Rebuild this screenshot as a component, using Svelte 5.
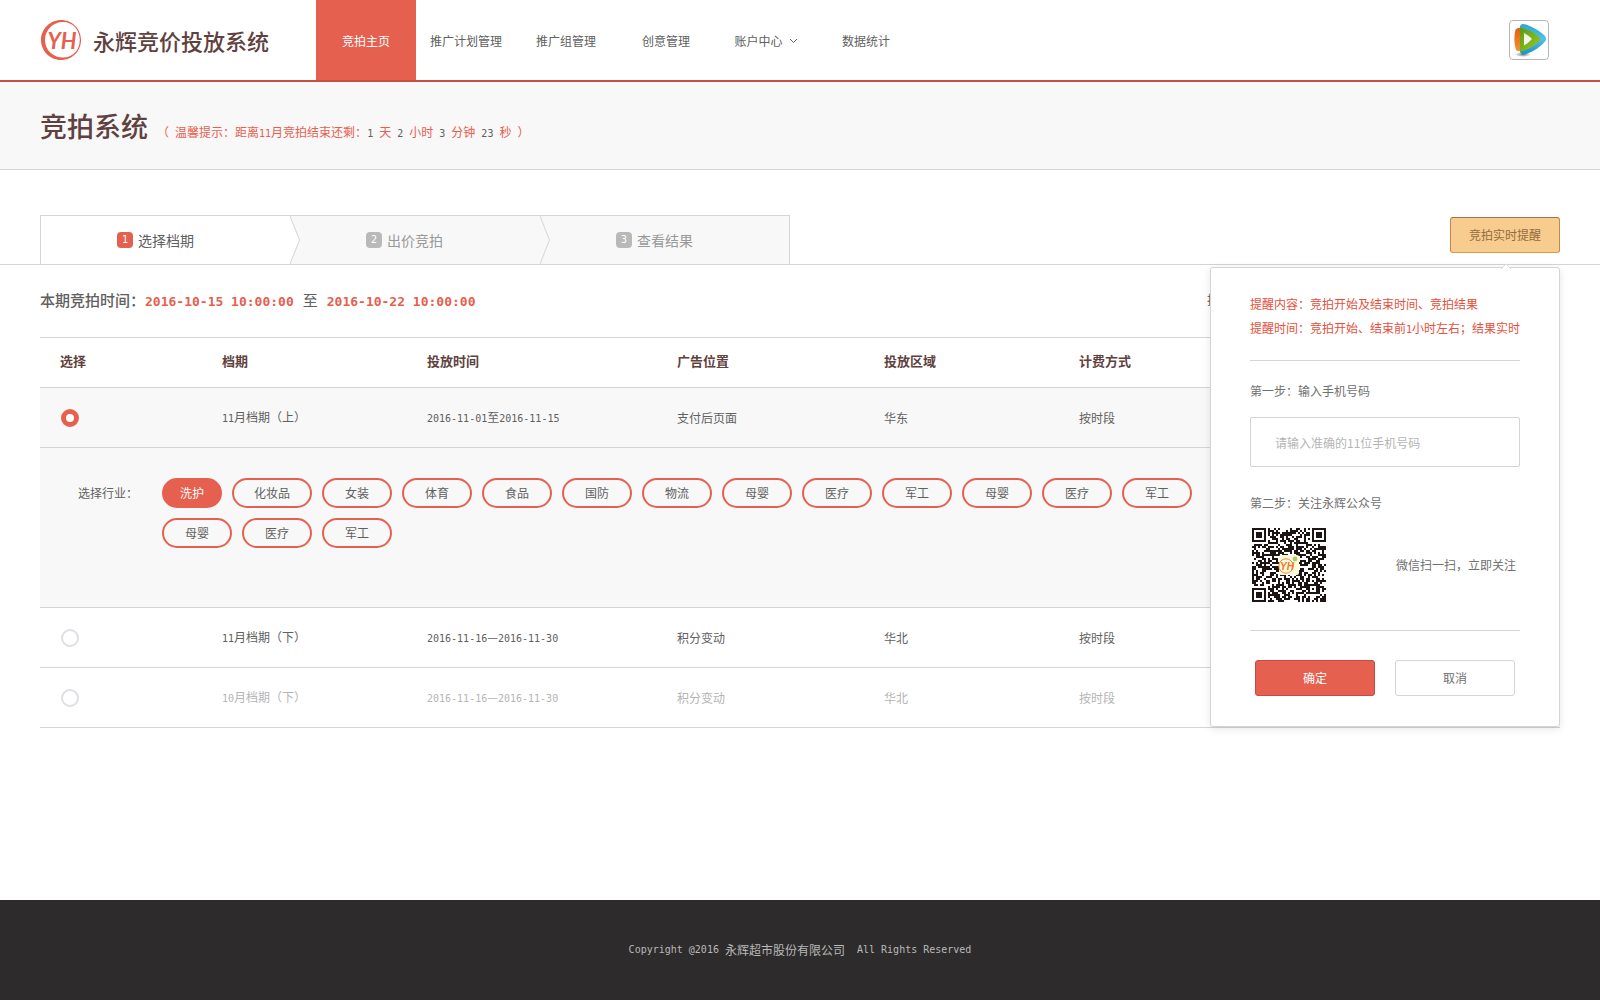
<script lang="ts">
  const nav = ['竞拍主页', '推广计划管理', '推广组管理', '创意管理', '账户中心', '数据统计'];
  const steps = ['选择档期', '出价竞拍', '查看结果'];
  const heads = ['选择', '档期', '投放时间', '广告位置', '投放区域', '计费方式'];
  const industries = [
    '洗护', '化妆品', '女装', '体育', '食品', '国防', '物流', '母婴',
    '医疗', '军工', '母婴', '医疗', '军工', '母婴', '医疗', '军工'
  ];
  const rows = [
    { cells: ['11月档期（上）', '2016-11-01至2016-11-15', '支付后页面', '华东', '按时段'], off: false },
    { cells: ['11月档期（下）', '2016-11-16—2016-11-30', '积分变动', '华北', '按时段'], off: false },
    { cells: ['10月档期（下）', '2016-11-16—2016-11-30', '积分变动', '华北', '按时段'], off: true }
  ];
  const left = [['1', '天'], ['2', '小时'], ['3', '分钟'], ['23', '秒']];

  let picked = $state(0);
  let industry = $state(0);
  let open = $state(true);
  let phone = $state('');

  // Splits text so that Latin runs can take the half-width face.
  const runs = (s: string) => s.split(/([ -~]+)/).filter(Boolean);
  const isLatin = (s: string) => /^[ -~]/.test(s);

  // 37 x 37 module code with three finders and one alignment mark.
  function buildCode(): string {
    const n = 37;
    let seed = 20161;
    let d = '';
    const ring = (x: number, y: number, cx: number, cy: number) => Math.max(Math.abs(x - cx), Math.abs(y - cy));
    for (let y = 0; y < n; y++) {
      for (let x = 0; x < n; x++) {
        seed = (seed * 1103515245 + 12345) % 2147483648;
        let on = (seed >> 16) % 100 < 55;
        for (const [cx, cy] of [[3, 3], [33, 3], [3, 33]]) {
          const r = ring(x, y, cx, cy);
          if (r <= 4) on = r === 3 || r <= 1;
        }
        const a = ring(x, y, 30, 30);
        if (a <= 2) on = a !== 1;
        if (x > 13 && x < 23 && y > 13 && y < 23) on = false;
        if (on) d += `M${x} ${y}h1v1h-1z`;
      }
    }
    return d;
  }
  const code = buildCode();
</script>

{#snippet mix(text: string)}
  {#each runs(text) as r}{#if isLatin(r)}<span class="lat">{r}</span>{:else}{r}{/if}{/each}
{/snippet}

<div class="page">
  <header class="top">
    <a class="brand" href="#home">
      <svg width="42" height="42" viewBox="0 0 42 42" aria-hidden="true">
        <path fill="#e6604f" fill-rule="evenodd" d="M21 1C32 1 41 9.500 41 21S32 41 21 41 1 32 1 21 10 1 21 1ZM23 3C13 3 5 11 5 21s8 17.500 18 17.500S39.800 31 39.800 21 33 3 23 3Z" />
        <text x="22" y="30" text-anchor="middle" class="mark">YH</text>
      </svg>
      <span>永辉竞价投放系统</span>
    </a>
    <nav>
      {#each nav as item, i}
        <a href="#nav-{i}" class:active={i === 0}>
          {item}
          {#if i === 4}
            <svg width="9" height="6" viewBox="0 0 9 6" aria-hidden="true"><path d="M1 1l3.500 3.500L8 1" fill="none" stroke="#666" /></svg>
          {/if}
        </a>
      {/each}
    </nav>
    <button class="avatar" aria-label="用户">
      <svg width="34" height="34" viewBox="0 0 34 34" aria-hidden="true">
        <defs>
          <linearGradient id="b" x1="0" y1="0" x2="0" y2="1"><stop offset="0" stop-color="#2fa3d4" /><stop offset=".5" stop-color="#52c1e6" /><stop offset="1" stop-color="#1c8fc6" /></linearGradient>
          <linearGradient id="g" x1="0" y1="0" x2="1" y2="1"><stop offset="0" stop-color="#5a9c0c" /><stop offset="1" stop-color="#9cc92a" /></linearGradient>
          <linearGradient id="o" x1="0" y1="0" x2="0" y2="1"><stop offset="0" stop-color="#e25f10" /><stop offset="1" stop-color="#f59133" /></linearGradient>
          <radialGradient id="s"><stop offset="0" stop-color="#777" /><stop offset="1" stop-color="#777" stop-opacity="0" /></radialGradient>
        </defs>
        <ellipse cx="11" cy="31.500" rx="8" ry="2.500" fill="url(#s)" />
        <path d="M3.500 6.500Q6 4 9 5V28Q5 28.500 4 27Q1 17 3.500 6.500Z" fill="url(#o)" />
        <path d="M8 3Q9 0 14 1.500Q26 6 33 13Q35 16 33 18.500Q26 27 14 31Q9 32.500 8 29Z" fill="url(#b)" />
        <path d="M8 4.500Q19 7 27 13.500Q29 16 27 18.500Q19 26 8 28.500Z" fill="url(#g)" />
        <path d="M12 10Q16 12 20 16Q16 20.500 12 22.500Z" fill="#f2f5ec" />
      </svg>
    </button>
  </header>

  <section class="title">
    <h1>竞拍系统</h1>
    <p>
      {@render mix('（ 温馨提示：距离11月竞拍结束还剩：')}{#each left as [num, unit], i}<b class="lat">{i ? ` ${num} ` : `${num} `}</b>{unit}{/each}{@render mix(' ）')}
    </p>
  </section>

  <div class="bar">
    <ol>
      {#each steps as step, i}
        <li class:current={i === 0}>
          <span class="chev">
            {#if i > 0}
              <svg width="10" height="48" viewBox="0 0 10 48" aria-hidden="true">
                <path d="M0 0L9.500 24L0 48z" fill={i === 1 ? '#fff' : '#f8f8f8'} />
                <path d="M0 0L9.500 24L0 48" fill="none" stroke="#d4d4d4" />
              </svg>
            {/if}
          </span>
          <span class="badge lat">{i + 1}</span>{step}
        </li>
      {/each}
    </ol>

    <div class="reminder">
      <button class="remind" onclick={() => (open = !open)}>竞拍实时提醒</button>
      {#if open}
        <form class="panel" onsubmit={(e) => e.preventDefault()}>
          <svg class="tip" width="10" height="6" viewBox="0 0 10 6" aria-hidden="true">
            <path d="M0 6L5 1L10 6" fill="#fff" stroke="#dcdcdc" />
          </svg>
          <p class="notice">提醒内容：竞拍开始及结束时间、竞拍结果<br />{@render mix('提醒时间：竞拍开始、结束前1小时左右；结果实时')}</p>
          <hr />
          <label for="phone">第一步：输入手机号码</label>
          <input id="phone" type="tel" placeholder="请输入准确的11位手机号码" bind:value={phone} />
          <h2>第二步：关注永辉公众号</h2>
          <div class="scan">
            <svg width="74" height="74" viewBox="0 0 37 37" role="img" aria-label="公众号二维码">
              <path d={code} fill="#1d1513" shape-rendering="crispEdges" />
              <rect x="13.500" y="13.500" width="10" height="10" rx="1" fill="#fdf9dc" />
              <circle cx="17" cy="19" r="3.600" fill="none" stroke="#f08a3c" stroke-width=".5" />
              <circle cx="21.500" cy="15.500" r="1.200" fill="#a9cf6a" />
              <text x="17.500" y="20.800" text-anchor="middle" class="mini">YH</text>
            </svg>
            <span>微信扫一扫，立即关注</span>
          </div>
          <hr />
          <div class="actions">
            <button type="submit" class="ok">确定</button>
            <button type="button" onclick={() => (open = false)}>取消</button>
          </div>
        </form>
      {/if}
    </div>
  </div>

  <main>
    <div class="period">
      <p><strong>本期竞拍时间：</strong><time>2016-10-15 10:00:00</time><span>至</span><time>2016-10-22 10:00:00</time></p>
      <span class="more">投</span>
    </div>

    <table>
      <colgroup><col class="c1" /><col class="c2" /><col class="c3" /><col class="c4" /><col class="c5" /><col /></colgroup>
      <thead>
        <tr>{#each heads as h}<th scope="col">{h}</th>{/each}</tr>
      </thead>
      <tbody>
        {#each rows as row, i}
          <tr class:chosen={picked === i} class:off={row.off}>
            <td><input type="radio" name="slot" value={i} bind:group={picked} disabled={row.off} aria-label={row.cells[0]} /></td>
            {#each row.cells as cell}<td>{@render mix(cell)}</td>{/each}
          </tr>
          {#if picked === i}
            <tr class="chosen">
              <td colspan="6" class="detail">
                <div class="pick">
                  <span>选择行业：</span>
                  <div class="tags">
                    {#each industries as name, k}
                      <button class:on={industry === k} onclick={() => (industry = k)}>{name}</button>
                    {/each}
                  </div>
                </div>
              </td>
            </tr>
          {/if}
        {/each}
      </tbody>
    </table>
  </main>

  <footer>{@render mix('Copyright @2016 永辉超市股份有限公司  All Rights Reserved')}</footer>
</div>

<style>
  :global(body) { margin: 0; }
  .page, .page * { box-sizing: border-box; }
  .page {
    min-height: 100vh;
    display: flex;
    flex-direction: column;
    background: #fff;
    color: #606060;
    font: 12px/20px "Noto Sans CJK SC", sans-serif;
  }
  button, input { font: inherit; color: inherit; margin: 0; padding: 0; }
  button { cursor: pointer; }
  a { color: inherit; text-decoration: none; }
  p, h1, h2, ol { margin: 0; padding: 0; }
  svg { display: block; flex: none; }
  .lat { font-family: "DejaVu Sans Mono", monospace; font-size: 10px; white-space: pre; }

  .top { display: flex; height: 82px; padding: 0 51px 0 40px; border-bottom: 2px solid #c4513f; }
  .brand { display: flex; align-items: center; gap: 11px; width: 276px; color: #5f4240; font-size: 22px; font-weight: 500; white-space: nowrap; }
  .mark { font: italic bold 22px Lato, sans-serif; fill: #e6604f; }
  nav { display: flex; }
  nav a { width: 100px; display: flex; align-items: center; justify-content: center; gap: 6px; padding-top: 2px; white-space: nowrap; }
  nav a.active { background: #e6604f; color: #fff; }
  .avatar { width: 40px; height: 40px; margin: 20px 0 0 auto; display: grid; place-items: center; background: #fff; border: 1px solid #b5b5b5; border-radius: 4px; }

  .title { display: flex; align-items: baseline; gap: 9px; height: 88px; padding: 24px 40px 0; background: #f8f8f8; border-bottom: 1px solid #d4d4d4; }
  h1 { color: #5f4240; font-size: 27px; line-height: 40px; font-weight: 500; }
  .title p { color: #e6604f; }
  .title b { font-weight: 400; color: #606060; }

  .bar { display: flex; justify-content: space-between; padding: 45px 40px 0; border-bottom: 1px solid #d4d4d4; }
  ol { display: flex; list-style: none; border-top: 1px solid #d4d4d4; }
  li { display: flex; align-items: center; width: 250px; height: 48px; background: #f8f8f8; color: #999; font-size: 14px; }
  li:first-child { border-left: 1px solid #d4d4d4; }
  li:last-child { border-right: 1px solid #d4d4d4; }
  li.current { background: #fff; color: #606060; }
  .chev { width: 10px; margin-right: 66px; }
  .badge { width: 16px; height: 16px; margin-right: 5px; border-radius: 4px; background: #b9b9b9; color: #fff; line-height: 16px; text-align: center; }
  .current .badge { background: #e6604f; }

  .reminder { position: relative; padding-top: 2px; }
  .remind { display: block; width: 110px; height: 36px; border: 1px solid; border-color: #9c7543 #c08b49 #dd9b42; border-radius: 3px; background: #f8cb8f; color: #946c3d; }
  .panel { position: absolute; z-index: 1; top: calc(100% + 3px); right: 0; width: 350px; padding: 24px 39px 30px; background: #fff; border: 1px solid #d4d4d4; border-radius: 3px; box-shadow: 0 2px 8px rgba(0, 0, 0, .1); }
  .tip { position: absolute; right: 48px; bottom: 100%; margin-bottom: -1px; }
  .notice { line-height: 24px; color: #e6503c; white-space: nowrap; }
  hr { height: 1px; margin: 18px 0 20px; border: 0; background: #d4d4d4; }
  label, h2 { display: block; font-size: 12px; line-height: 20px; font-weight: 400; color: #707070; }
  .panel input { display: block; width: 100%; height: 50px; margin: 16px 0 26px; padding: 0 24px; border: 1px solid #d4d4d4; border-radius: 2px; background: #fff; }
  .panel input::placeholder { color: #b5b5b5; opacity: 1; }
  .scan { display: flex; align-items: center; justify-content: space-between; padding: 15px 4px 10px 2px; color: #707070; }
  .mini { font: italic bold 5px "Liberation Sans", sans-serif; fill: #ee7a2c; }
  .actions { display: flex; gap: 20px; padding: 9px 5px 0; }
  .actions button { flex: 1; height: 36px; border: 1px solid #d4d4d4; border-radius: 3px; background: #fff; color: #707070; }
  .actions .ok { border-color: #c64a45; background: #e6604f; color: #fff; }

  main { flex: 1; padding: 0 40px 60px; }
  .period { display: flex; align-items: center; height: 72px; padding-bottom: 3px; font-size: 15px; }
  .period p { flex: none; width: 1167px; }
  strong { font-weight: 500; }
  time { font: bold 13px "DejaVu Sans Mono", monospace; color: #e6604f; }
  .period p span { margin: 0 9px; }
  .more { font-size: 12px; }

  table { width: 100%; border-collapse: separate; border-spacing: 0; table-layout: fixed; border-top: 1px solid #d4d4d4; }
  .c1 { width: 162px; }
  .c2 { width: 205px; }
  .c3 { width: 250px; }
  .c4 { width: 207px; }
  .c5 { width: 195px; }
  th { height: 50px; padding: 0 20px 4px; border-bottom: 1px solid #d4d4d4; text-align: left; font-size: 13px; font-weight: 700; color: #5f4240; }
  td { height: 60px; padding: 0 20px; border-bottom: 1px solid #d4d4d4; }
  .chosen td { background: #f8f8f8; }
  .off td { color: #b5b5b5; }
  td input { appearance: none; display: block; width: 18px; height: 18px; margin-left: 1px; border: 2px solid #dedee4; border-radius: 50%; background: #fff; }
  td input:checked { border: 5px solid #e6604f; }
  .detail { height: 160px; padding: 30px 38px; vertical-align: top; }
  .pick { display: flex; gap: 24px; line-height: 30px; }
  .tags { display: flex; flex-wrap: wrap; gap: 10px; max-width: 1040px; }
  .tags button { min-width: 70px; height: 30px; padding: 0 20px; border: 2px solid #e6604f; border-radius: 15px; background: none; line-height: 26px; }
  .tags .on { min-width: 60px; padding: 0 16px; background: #e6604f; color: #fff; }

  footer { display: flex; align-items: center; justify-content: center; height: 100px; background: #2e2b2c; color: #b9b9b9; white-space: pre; }
</style>
